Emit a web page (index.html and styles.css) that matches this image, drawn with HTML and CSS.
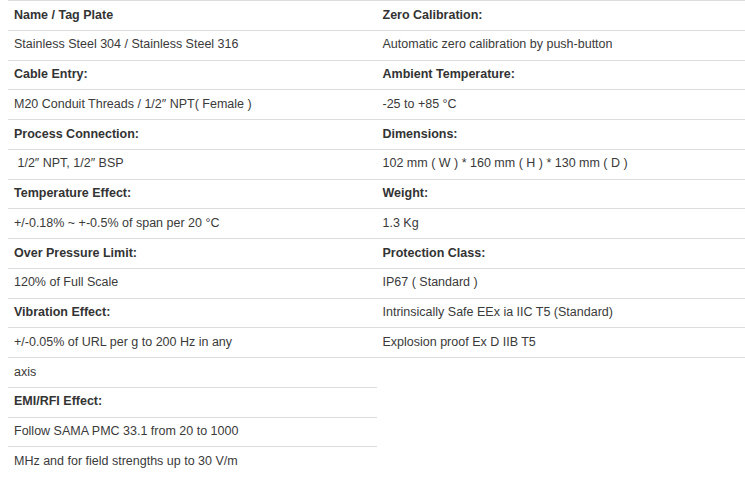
FILE: index.html
```html
<!DOCTYPE html>
<html lang="en">
<head>
<meta charset="utf-8">
<title>Specifications</title>
<link rel="stylesheet" href="styles.css">
</head>
<body>
<div class="spec-grid">
  <div class="spec-col">
    <div class="row head">Name / Tag Plate</div>
    <div class="row">Stainless Steel 304 / Stainless Steel 316</div>
    <div class="row head">Cable Entry:</div>
    <div class="row">M20 Conduit Threads / 1/2″ NPT( Female )</div>
    <div class="row head">Process Connection:</div>
    <div class="row">&nbsp;1/2″ NPT, 1/2″ BSP</div>
    <div class="row head">Temperature Effect:</div>
    <div class="row">+/-0.18% ~ +-0.5% of span per 20 °C</div>
    <div class="row head">Over Pressure Limit:</div>
    <div class="row">120% of Full Scale</div>
    <div class="row head">Vibration Effect:</div>
    <div class="row">+/-0.05% of URL per g to 200 Hz in any</div>
    <div class="row">axis</div>
    <div class="row head">EMI/RFI Effect:</div>
    <div class="row">Follow SAMA PMC 33.1 from 20 to 1000</div>
    <div class="row">MHz and for field strengths up to 30 V/m</div>
  </div>
  <div class="spec-col closed">
    <div class="row head">Zero Calibration:</div>
    <div class="row">Automatic zero calibration by push-button</div>
    <div class="row head">Ambient Temperature:</div>
    <div class="row">-25 to +85 °C</div>
    <div class="row head">Dimensions:</div>
    <div class="row">102 mm ( W ) * 160 mm ( H ) * 130 mm ( D )</div>
    <div class="row head">Weight:</div>
    <div class="row">1.3 Kg</div>
    <div class="row head">Protection Class:</div>
    <div class="row">IP67 ( Standard )</div>
    <div class="row">Intrinsically Safe EEx ia IIC T5 (Standard)</div>
    <div class="row">Explosion proof Ex D IIB T5</div>
  </div>
</div>
</body>
</html>
```

FILE: styles.css
```css
html, body {
  background: #ffffff;
}
body {
  margin: 0 0 0 8px;
  font-family: "Liberation Sans", Arial, sans-serif;
  font-size: 12.5px;
  line-height: 18.75px;
  color: #3a3a3a;
}
.spec-grid {
  display: grid;
  grid-template-columns: 1fr 1fr;
  align-items: start;
}
.spec-col {
  display: flex;
  flex-direction: column;
}
.spec-col.closed {
  border-bottom: 1px solid #dddddd;
}
.row {
  border-top: 1px solid #dddddd;
  padding: 4.5px 6px 5.5px;
  white-space: nowrap;
}
.row.head {
  font-weight: bold;
  color: #333333;
}
```
